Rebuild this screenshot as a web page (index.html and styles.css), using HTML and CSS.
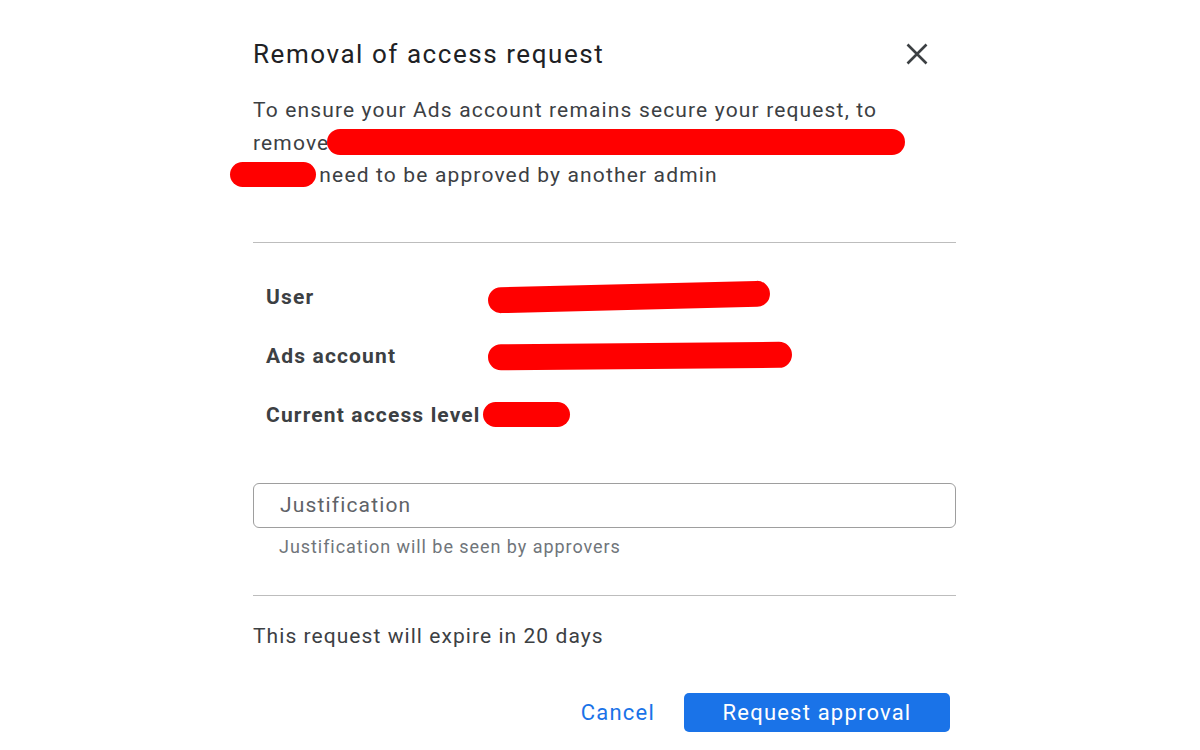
FILE: index.html
```html
<!DOCTYPE html>
<html>
<head>
	<title>Removal of access request</title>
	<link rel="stylesheet" href="styles.css">
</head>

<body>
	<div class="dialog">
		<div class="head">
			<h1 class="title">Removal of access request</h1>
			<button class="close" aria-label="Close">
				<svg width="24" height="24" viewBox="0 0 24 24">
					<path d="M2.5 2.5 L21.5 21.5 M21.5 2.5 L2.5 21.5" stroke="#3c4043" stroke-width="2.6" fill="none"/>
				</svg>
			</button>
		</div>

		<p class="intro">
			To ensure your Ads account remains secure your request, to<br>
			remove<span class="redact redact-long"></span><br>
			<span class="redact redact-lead"></span> need to be approved by another admin
		</p>

		<hr class="rule">

		<div class="rows">
			<div class="row">
				<span class="label">User</span>
				<span class="redact redact-user"></span>
			</div>
			<div class="row">
				<span class="label">Ads account</span>
				<span class="redact redact-account"></span>
			</div>
			<div class="row">
				<span class="label label-auto">Current access level</span>
				<span class="redact redact-level"></span>
			</div>
		</div>

		<div class="field">
			<input type="text" placeholder="Justification">
		</div>
		<div class="helper">Justification will be seen by approvers</div>

		<hr class="rule rule-low">

		<p class="expire">This request will expire in 20 days</p>

		<div class="actions">
			<button class="btn-text">Cancel</button>
			<button class="btn-primary">Request approval</button>
		</div>
	</div>
</body>
</html>
```

FILE: styles.css
```css
*{
	box-sizing:border-box;
}

body{
	margin:0;
	background:#fff;
	font-family:Roboto, "Noto Sans", Arial, sans-serif;
	color:#3c4043;
}

.dialog{
	width:703px;
	margin-left:253px;
	padding-top:38px;
}

.head{
	display:flex;
	justify-content:space-between;
	align-items:center;
	height:32px;
}

.title{
	margin:0;
	font-size:26px;
	line-height:32px;
	font-weight:400;
	letter-spacing:1.55px;
	color:#202124;
}

.close{
	border:0;
	background:none;
	padding:0;
	margin-right:27px;
	width:24px;
	height:24px;
	cursor:pointer;
}

.close svg{
	display:block;
}

.intro{
	margin:24px 0 0;
	font-size:21px;
	line-height:32.5px;
	letter-spacing:1.15px;
}

/* hidden values are painted over with a red marker */
.redact{
	display:inline-block;
	background:#ff0000;
	border-radius:14px;
	vertical-align:middle;
}

.redact-long{
	width:578px;
	height:26px;
	margin-left:-2px;
	margin-top:-4px;
}

.redact-lead{
	width:86px;
	height:25px;
	margin-left:-23px;
	margin-right:-3px;
	margin-top:-4px;
}

.rule{
	margin:50px 0 0;
	border:0;
	border-top:1px solid #bdbdbd;
	height:0;
}

.rule-low{
	margin-top:38px;
}

.rows{
	margin-top:39px;
	padding-left:13px;
	display:flex;
	flex-direction:column;
	gap:29px;
}

.row{
	display:flex;
	align-items:center;
	height:30px;
}

.label{
	width:222px;
	flex:none;
	font-size:21px;
	font-weight:700;
	letter-spacing:1.15px;
	color:#3c4043;
}

.label-auto{
	width:auto;
}

.redact-user{
	width:282px;
	height:26px;
	transform:rotate(-1.4deg);
	margin-top:1px;
}

.redact-account{
	width:304px;
	height:26px;
	transform:rotate(-0.5deg);
	margin-top:1px;
}

.redact-level{
	width:87px;
	height:25px;
	margin-left:2px;
}

.field{
	margin-top:53px;
	height:45px;
	border:1px solid #9e9e9e;
	border-radius:6px;
	display:flex;
	align-items:center;
	padding-left:26px;
}

.field input{
	border:0;
	outline:0;
	width:100%;
	font-family:inherit;
	font-size:21px;
	letter-spacing:1.15px;
	color:#3c4043;
	background:none;
	padding:0;
}

.field input::placeholder{
	color:#5f6368;
}

.helper{
	margin-top:9px;
	padding-left:26px;
	font-size:18px;
	line-height:20px;
	letter-spacing:0.95px;
	color:#70757a;
}

.expire{
	margin:25px 0 0;
	font-size:21px;
	line-height:30px;
	letter-spacing:1.06px;
}

.actions{
	margin-top:42px;
	display:flex;
	justify-content:flex-end;
	align-items:center;
	padding-right:6px;
}

.btn-text{
	border:0;
	background:none;
	font-family:inherit;
	font-size:22px;
	letter-spacing:1.2px;
	color:#1a73e8;
	padding:0;
	margin-right:29px;
	cursor:pointer;
}

.btn-primary{
	width:266px;
	height:39px;
	border:0;
	border-radius:5px;
	background:#1a73e8;
	color:#fff;
	font-family:inherit;
	font-size:22px;
	letter-spacing:1.2px;
	cursor:pointer;
}
```
